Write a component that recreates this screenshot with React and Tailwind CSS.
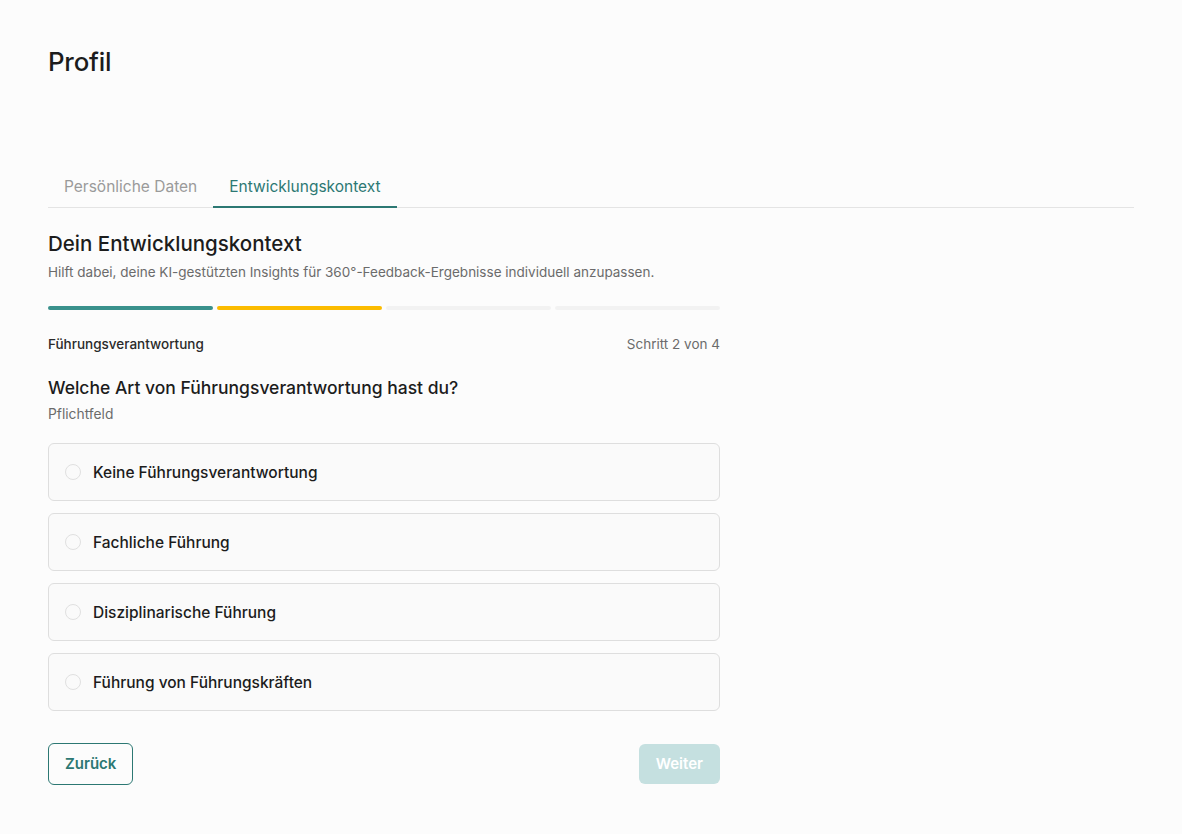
import { useState } from "react";

const options = [
  "Keine Führungsverantwortung",
  "Fachliche Führung",
  "Disziplinarische Führung",
  "Führung von Führungskräften",
];

export default function App() {
  const [selected, setSelected] = useState(null);

  return (
    <div className="min-h-screen bg-[#fcfcfc] font-['Inter',sans-serif] text-[#1c1c1c]">
      <div className="px-12 pt-[46px] pb-12">
        <h1 className="text-[25.8px] font-medium leading-8 tracking-[-0.2px]">Profil</h1>

        {/* Tabs */}
        <div className="mt-[94px] flex border-b border-[#e4e4e4]">
          <button className="px-4 pb-[8px] pt-[3px] text-[15.5px] text-[#9a9a9a] border-b-2 border-transparent -mb-px">
            Persönliche Daten
          </button>
          <button className="px-4 pb-[8px] pt-[3px] text-[15.5px] text-[#2c7873] border-b-2 border-[#2c7873] -mb-px">
            Entwicklungskontext
          </button>
        </div>

        <div className="w-[672px]">
          <h2 className="mt-[22px] text-[20.5px] font-medium leading-7">Dein Entwicklungskontext</h2>
          <p className="mt-[4px] text-[13.5px] text-[#6b6b6b]">
            Hilft dabei, deine KI-gestützten Insights für 360°-Feedback-Ergebnisse individuell anzupassen.
          </p>

          {/* Progress */}
          <div className="mt-[23px] grid grid-cols-4 gap-1">
            <div className="h-1 rounded-full bg-[#3a918c]" />
            <div className="h-1 rounded-full bg-[#fbbb00]" />
            <div className="h-1 rounded-full bg-[#f2f2f2]" />
            <div className="h-1 rounded-full bg-[#f2f2f2]" />
          </div>

          <div className="mt-[24px] flex items-center justify-between text-[13.5px]">
            <span className="font-medium text-[#2a2a2a]">Führungsverantwortung</span>
            <span className="text-[#6b6b6b]">Schritt 2 von 4</span>
          </div>

          <h3 className="mt-[22px] text-[17.5px] font-medium leading-6">
            Welche Art von Führungsverantwortung hast du?
          </h3>
          <p className="mt-[4px] text-[13.8px] text-[#6b6b6b]">Pflichtfeld</p>

          <div className="mt-[19px] flex flex-col gap-3">
            {options.map((opt, i) => (
              <label
                key={opt}
                onClick={() => setSelected(i)}
                className="flex h-[58px] cursor-pointer items-center gap-3 rounded-md border border-[#dedede] bg-[#fafafa] px-4"
              >
                <span className="flex h-4 w-4 items-center justify-center rounded-full border border-[#e0e0e0] bg-[#fafafa]">
                  {selected === i && <span className="h-2 w-2 rounded-full bg-[#2c7873]" />}
                </span>
                <span className="text-[15.5px] font-medium text-[#1c1c1c]">{opt}</span>
              </label>
            ))}
          </div>

          <div className="mt-8 flex items-center justify-between">
            <button className="h-[42px] rounded-md border border-[#2c7873] px-4 text-[15px] font-semibold text-[#2c7873]">
              Zurück
            </button>
            <button
              disabled={selected === null}
              className="h-10 rounded-md bg-[#c5e0e0] px-[17px] text-[15px] font-semibold text-white"
            >
              Weiter
            </button>
          </div>
        </div>
      </div>
    </div>
  );
}
